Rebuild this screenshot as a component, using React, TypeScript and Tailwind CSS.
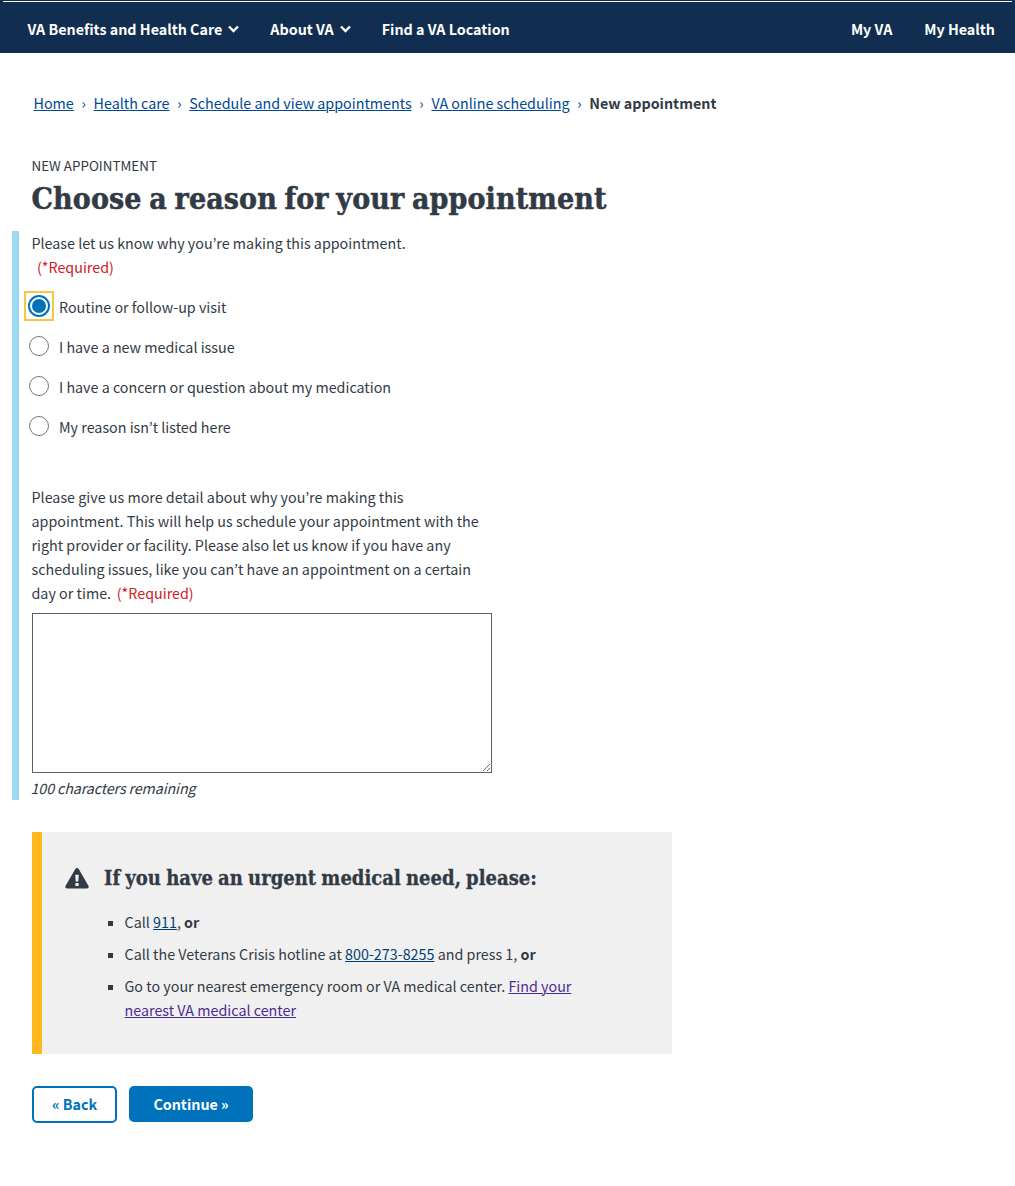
import React from 'react';

const link = 'text-[#004795] underline decoration-1 underline-offset-1';

function Chevron() {
  return (
    <svg className="ml-[6px] h-[8px] w-[11px]" viewBox="0 0 11 8" fill="none" stroke="currentColor" strokeWidth="2.4">
      <path d="M1 1.5 5.5 6 10 1.5" />
    </svg>
  );
}

function Header() {
  return (
    <header className="h-[53px] bg-[#112e51] pt-px text-white">
      <div className="mr-[3px] ml-[3px] h-px bg-white" />
      <nav className="flex h-[51px] items-center pt-[3px] pr-[20px] pl-[27.5px] text-[14.3px] font-bold">
        <a className="flex items-center">VA Benefits and Health Care<Chevron /></a>
        <a className="ml-[31px] flex items-center">About VA<Chevron /></a>
        <a className="ml-[31px]">Find a VA Location</a>
        <a className="ml-auto">My VA</a>
        <a className="ml-[32px]">My Health</a>
      </nav>
    </header>
  );
}

function Breadcrumbs() {
  const items = ['Home', 'Health care', 'Schedule and view appointments', 'VA online scheduling'];
  return (
    <nav className="mt-[38px] ml-[33.5px] flex">
      {items.map((t) => (
        <React.Fragment key={t}>
          <a className={link}>{t}</a>
          <span className="w-[19.8px] text-center text-[#004795]">›</span>
        </React.Fragment>
      ))}
      <span className="font-bold">New appointment</span>
    </nav>
  );
}

function Radio({ label, checked }: { label: string; checked?: boolean }) {
  return (
    <label className="mb-4 flex h-6 items-center">
      {checked ? (
        <span className="-mt-0.5 -ml-2 mr-[5px] flex h-[30px] w-[30px] shrink-0 items-center justify-center border-2 border-[#f9c642]">
          <span className="flex h-[22px] w-[22px] items-center justify-center rounded-full border-2 border-[#0071bb] bg-white">
            <span className="h-[14px] w-[14px] rounded-full bg-[#0071bb]" />
          </span>
        </span>
      ) : (
        <span className="-mt-0.5 -ml-[3px] mr-[10px] h-[20px] w-[20px] shrink-0 rounded-full border border-[#757575] bg-white" />
      )}
      {label}
    </label>
  );
}

function Item({ children }: { children: React.ReactNode }) {
  return (
    <li className="flex whitespace-nowrap">
      <span className="mt-[11px] mr-[11.5px] ml-[4px] h-[5px] w-[5px] shrink-0 bg-[#323a45]" />
      <div>{children}</div>
    </li>
  );
}

function Alert() {
  return (
    <section className="mt-8 ml-8 flex h-[222px] w-[640px] border-l-[10px] border-[#fdb81e] bg-[#f0f0f0] pt-[34px] pl-[23px]">
      <svg className="mt-[2px] h-[21px] w-[24px] shrink-0" viewBox="0 0 24 21">
        <path d="M10.3 1Q12 -1 13.7 1L23.5 18Q24.2 20.5 22 20.6H2Q-.2 20.5 .5 18Z" fill="#323a45" />
        <path d="M10.2 6.8h3.6l-.5 6.6h-2.6zM10.4 15h3.2v3h-3.2z" fill="#f0f0f0" />
      </svg>
      <div className="ml-[15px]">
        <h2 className="font-['DejaVu_Serif_Condensed','DejaVu_Serif',serif] text-[20px] leading-[24px] font-bold tracking-[0.02px] [word-spacing:-1.1px] [-webkit-text-stroke:0.3px_#323a45]">If you have an urgent medical need, please:</h2>
        <ul className="mt-[20px] list-none space-y-2 tracking-[0.01px]">
          <Item>Call <a className="text-[#003e73] underline decoration-1 underline-offset-1">911</a>, <b>or</b></Item>
          <Item>Call the Veterans Crisis hotline at <a className="text-[#003e73] underline decoration-1 underline-offset-1">800-273-8255</a> and press 1, <b>or</b></Item>
          <Item>Go to your nearest emergency room or VA medical center. <a className="text-[#4c2c92] underline decoration-1 underline-offset-1">Find your<br />nearest VA medical center</a></Item>
        </ul>
      </div>
    </section>
  );
}

export default function App() {
  return (
    <div className="h-[1186px] w-[1015px] overflow-hidden bg-white font-['Noto_Sans_CJK_KR',sans-serif] text-[14.3px] leading-6 text-[#323a45]">
      <Header />
      <Breadcrumbs />
      <div className="mt-[38px] mb-px ml-[31.5px] text-[13.4px]">NEW APPOINTMENT</div>
      <h1 className="ml-[31.5px] h-[53px] font-['DejaVu_Serif_Condensed','DejaVu_Serif',serif] text-[30px] leading-[42px] font-bold tracking-[0.1px] [word-spacing:-1.8px] whitespace-nowrap [-webkit-text-stroke:0.5px_#323a45]">Choose a reason for your appointment</h1>
      <form className="ml-3 h-[569px] border-l-[7px] border-[#9bdaf1] pl-[12.5px]">
        <div>Please let us know why you’re making this appointment.</div>
        <div className="mb-4 pl-[5.5px] text-[#cd2026]">(*Required)</div>
        <div className="pl-[0.5px]">
          <Radio checked label="Routine or follow-up visit" />
          <Radio label="I have a new medical issue" />
          <Radio label="I have a concern or question about my medication" />
          <Radio label="My reason isn’t listed here" />
        </div>
        <div className="mt-[46px] tracking-[0.01px] whitespace-nowrap">
          Please give us more detail about why you’re making this<br />
          appointment. This will help us schedule your appointment with the<br />
          right provider or facility. Please also let us know if you have any<br />
          scheduling issues, like you can’t have an appointment on a certain<br />
          day or time. <span className="ml-[2.5px] text-[#cd2026]">(*Required)</span>
        </div>
        <textarea className="mt-2 ml-[0.5px] block h-[160px] w-[460px] resize border border-[#5b616b]" />
        <div className="mt-[3px] -ml-px tracking-[-0.12px] italic">100 characters remaining</div>
      </form>
      <Alert />
      <div className="mt-8 ml-8 flex gap-3 font-bold">
        <button className="h-[37px] w-[85px] rounded-[5px] border-2 border-[#0071bb] pb-[2px] text-[#0071bb]">« Back</button>
        <button className="h-[36px] w-[124px] rounded-[5px] bg-[#0071bb] text-white">Continue »</button>
      </div>
    </div>
  );
}
